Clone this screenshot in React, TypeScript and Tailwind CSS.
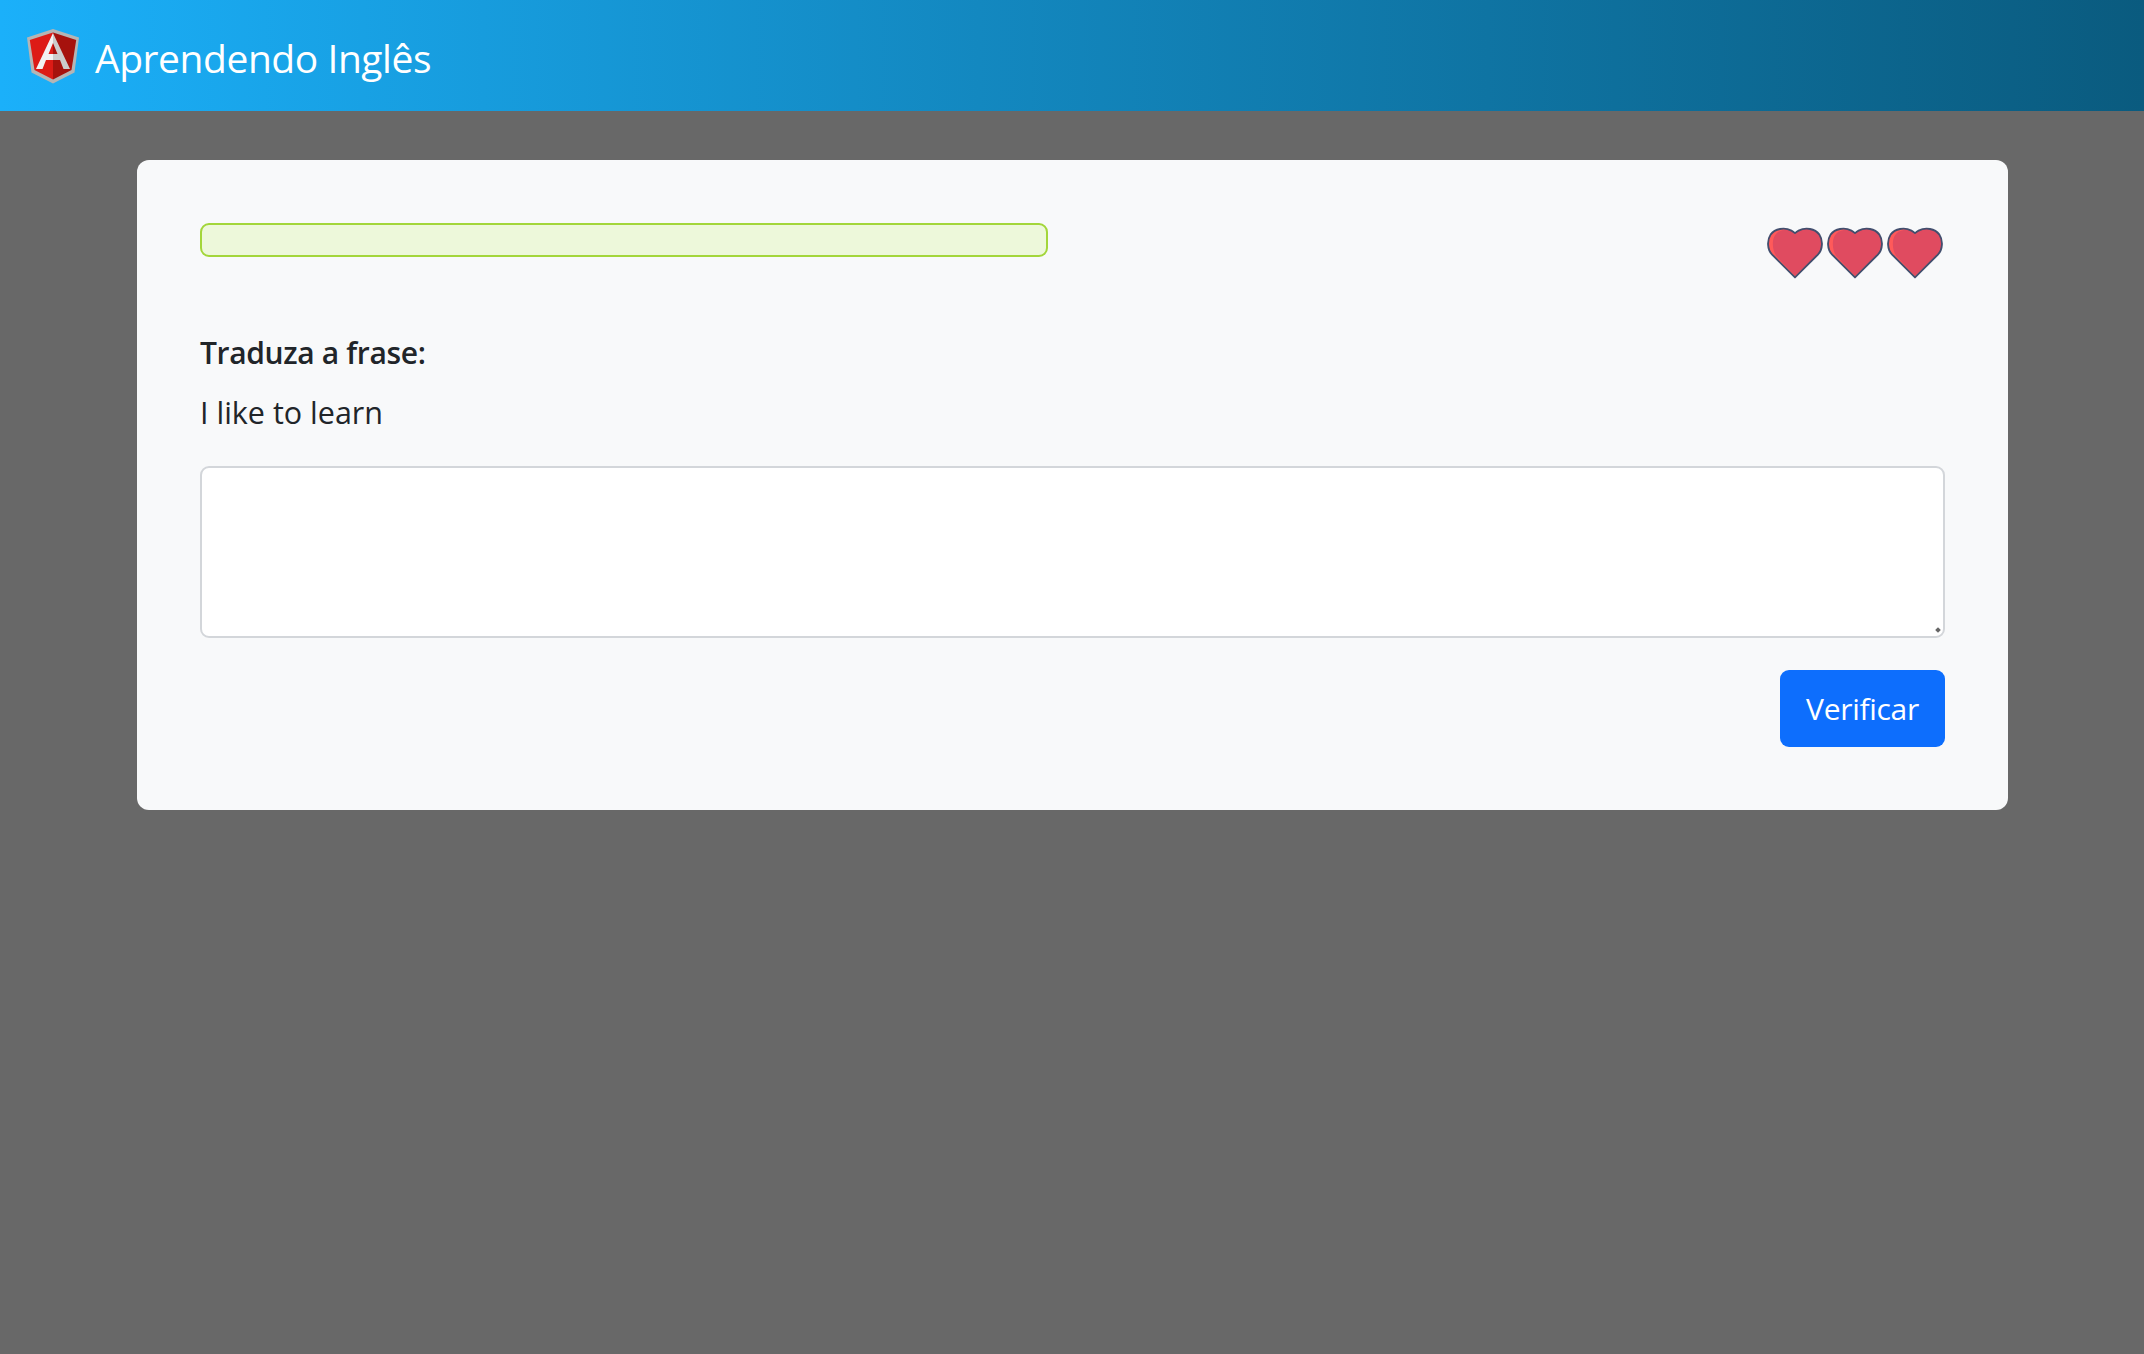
const AngularLogo = () => (
  <svg viewBox="0 0 54 56" className="w-[54px] h-[56px] shrink-0">
    <path d="M27 1 L53 9.500 L48.500 44.500 L27 55.500 L5.500 44.500 L1 9.500 Z" fill="#b5b5b5" />
    <path d="M27 4.500 L3.800 12 L8.500 42 L27 51.500 Z" fill="#dd1b16" />
    <path d="M27 4.500 L50.200 12 L45.500 42 L27 51.500 Z" fill="#a6120d" />
    <path d="M27 5 L10 41 L16.500 41 L20 32 L27 32 L27 26 L22.500 26 L27 15 Z" fill="#f2f2f2" />
    <path d="M27 5 L44 41 L37.500 41 L34 32 L27 32 L27 26 L31.500 26 L27 15 Z" fill="#cccccc" />
  </svg>
);

const heartOutline =
  "M27.500 49 L5 26.500 C0 21.500 0 12 3.500 7 C8 1 17 -0.500 24 3 C25.500 3.800 26.700 4.800 27.500 5.500 C28.300 4.800 29.500 3.800 31 3 C38 -0.500 47 1 51.500 7 C55 12 55 21.500 50 26.500 Z";

const Heart = () => (
  <svg viewBox="0 0 55 50" className="w-[56px] h-[52px] overflow-visible">
    <path d={heartOutline} fill="#ff5a5a" />
    <path
      d="M27.500 47 L10 29 C5 24 4 11 9 6 C13 2 20 1.500 24 3 C25.500 3.800 26.700 4.800 27.500 5.500 C28.300 4.800 29.500 3.800 31 3 C38 -0.500 47 1 51.500 7 C55 12 55 21.500 50 26.500 Z"
      fill="#e04b60"
    />
    <path d={heartOutline} fill="none" stroke="#434f6e" strokeWidth="1.800" strokeLinejoin="round" />
  </svg>
);

const App = () => {
  return (
    <div className="min-h-[1354px] bg-[#686868] font-['Open_Sans','Noto_Sans',sans-serif] text-[#212529]">
      <header className="h-[111px] flex items-center gap-[15px] pl-[26px] bg-gradient-to-r from-[#1bb0fa] to-[#0a5b7f]">
        <AngularLogo />
        <span className="text-[39px] leading-[58px] tracking-[-0.45px] text-white mt-[5px]">Aprendendo Inglês</span>
      </header>

      <main className="pl-[137px] pr-[136px] pt-[49px]">
        <div className="bg-[#f8f9fa] rounded-xl p-[63px] h-[650px]">
          <div className="flex justify-between items-start h-[110px]">
            <div className="w-[848px] h-[34px] rounded-[9px] border-2 border-[#a3d63a] bg-[#edf8da]" />
            <div className="flex gap-[4px] mt-[4px] mr-[2px]">
              <Heart />
              <Heart />
              <Heart />
            </div>
          </div>

          <h2 className="text-[30px] leading-[45px] font-semibold tracking-[-0.35px] mt-[-3px]">Traduza a frase:</h2>
          <p className="text-[30.5px] leading-[45px] mt-[15px]">I like to learn</p>

          <div className="relative mt-[31px]">
            <textarea className="block w-full h-[172px] rounded-[9px] border-2 border-[#d3d6da] bg-white outline-none resize-none" />
            <div className="absolute right-[5px] bottom-[6px] w-[4px] h-[4px] rotate-45 bg-[#666666]" />
          </div>

          <div className="flex justify-end mt-[32px]">
            <button className="w-[165px] h-[77px] rounded-[9px] bg-[#0d6efd] text-white text-[30px] tracking-[-0.3px]">
              Verificar
            </button>
          </div>
        </div>
      </main>
    </div>
  );
};

export default App;
